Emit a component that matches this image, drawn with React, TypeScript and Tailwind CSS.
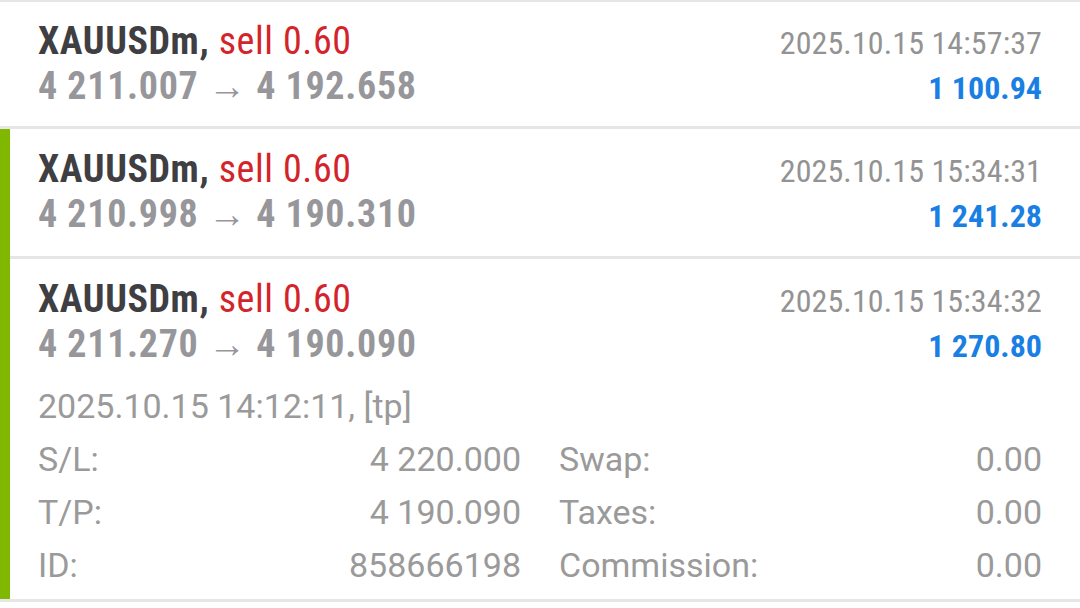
import React from "react";

const cond = { fontFamily: "Roboto, 'Liberation Sans', sans-serif" };

function Head({ sym, vol, from, to, time, profit }: { sym: string; vol: string; from: string; to: string; time: string; profit: string }) {
  return (
    <div className="flex flex-col font-stretch-condensed" style={cond}>
      <div className="flex h-[45px] items-baseline justify-between leading-[45px]">
        <span className="text-[38px] font-bold tracking-[0.6px] text-[#3f3f43]">
          {sym}, <span className="font-normal text-[#d3232b]">{vol}</span>
        </span>
        <span className="text-[32px] tracking-[0.1px] text-[#939393]">{time}</span>
      </div>
      <div className="flex h-[45px] items-baseline justify-between leading-[45px]">
        <span className="text-[38px] font-bold tracking-[0.7px] text-[#97979b]">
          {from} <span className="font-normal">→</span> {to}
        </span>
        <span className="text-[32px] font-bold text-[#1a7fe3]">{profit}</span>
      </div>
    </div>
  );
}

function Row({ label, value }: { label: string; value: string }) {
  return (
    <div className="flex items-baseline justify-between">
      <span>{label}</span>
      <span>{value}</span>
    </div>
  );
}

export default function App() {
  return (
    <div className="w-[1080px] h-[608px] bg-white overflow-hidden">
      <div className="h-[2px] bg-[#e6e6e6]" />
      <div className="h-[124px] pl-[38px] pr-[38px] pt-[17px]">
        <Head sym="XAUUSDm" vol="sell 0.60" from="4 211.007" to="4 192.658" time="2025.10.15 14:57:37" profit="1 100.94" />
      </div>
      <div className="h-[3px] bg-[#e6e6e6]" />
      <div className="border-l-[10px] border-[#80b800]">
        <div className="h-[127px] pl-[28px] pr-[38px] pt-[18px]">
          <Head sym="XAUUSDm" vol="sell 0.60" from="4 210.998" to="4 190.310" time="2025.10.15 15:34:31" profit="1 241.28" />
        </div>
        <div className="h-[3px] bg-[#e6e6e6]" />
        <div className="h-[340px] pl-[28px] pr-[38px] pt-[18px]">
          <Head sym="XAUUSDm" vol="sell 0.60" from="4 211.270" to="4 190.090" time="2025.10.15 15:34:32" profit="1 270.80" />
          <div className="mt-[13px] text-[34px] leading-[53px] text-[#9a9a9a]" style={{ fontFamily: "Roboto, sans-serif" }}>
            <div>2025.10.15 14:12:11, [tp]</div>
            <div className="grid grid-cols-2 gap-x-[38px]">
              <Row label="S/L:" value="4 220.000" />
              <Row label="Swap:" value="0.00" />
              <Row label="T/P:" value="4 190.090" />
              <Row label="Taxes:" value="0.00" />
              <Row label="ID:" value="858666198" />
              <Row label="Commission:" value="0.00" />
            </div>
          </div>
        </div>
      </div>
      <div className="h-[3px] bg-[#e6e6e6]" />
    </div>
  );
}
